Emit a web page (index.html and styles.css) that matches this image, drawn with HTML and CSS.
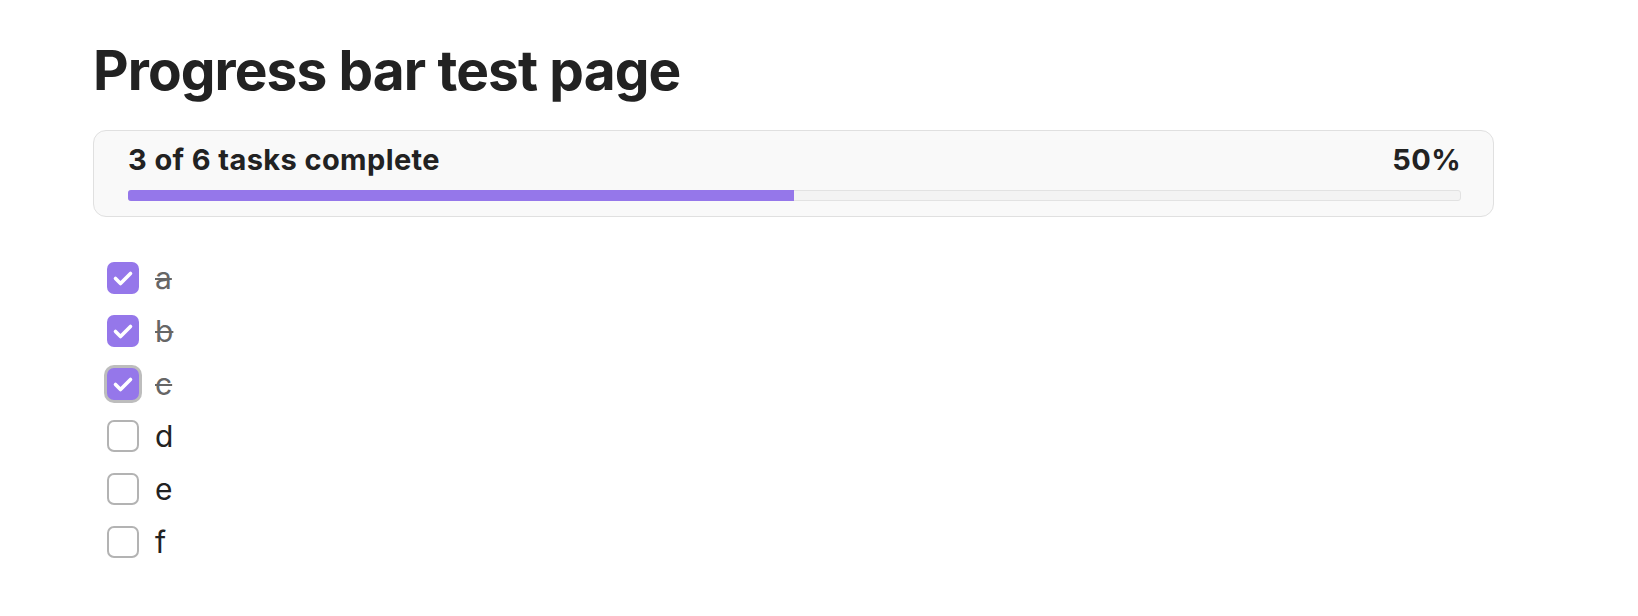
FILE: index.html
```html
<!DOCTYPE html>
<html lang="en">
<head>
<meta charset="utf-8">
<title>Progress bar test page</title>
<link rel="stylesheet" href="styles.css">
</head>
<body>
<main class="page">
  <h1 class="title">Progress bar test page</h1>
  <section class="card">
    <div class="card-head">
      <span class="count">3 of 6 tasks complete</span>
      <span class="pct">50%</span>
    </div>
    <div class="track"><div class="fill" style="width: 50%"></div></div>
  </section>
  <ul class="tasks">
    <li class="task done"><span class="box"><svg viewBox="0 0 32 32"><polyline points="8.5,16.5 13.5,21.5 23.5,11.5"/></svg></span><span class="label">a</span></li>
    <li class="task done"><span class="box"><svg viewBox="0 0 32 32"><polyline points="8.5,16.5 13.5,21.5 23.5,11.5"/></svg></span><span class="label">b</span></li>
    <li class="task done focus"><span class="box"><svg viewBox="0 0 32 32"><polyline points="8.5,16.5 13.5,21.5 23.5,11.5"/></svg></span><span class="label">c</span></li>
    <li class="task"><span class="box"></span><span class="label">d</span></li>
    <li class="task"><span class="box"></span><span class="label">e</span></li>
    <li class="task"><span class="box"></span><span class="label">f</span></li>
  </ul>
</main>
</body>
</html>
```

FILE: styles.css
```css
html, body {
  margin: 0;
  padding: 0;
  background: #ffffff;
}
body {
  font-family: Inter, "Noto Sans", "Liberation Sans", sans-serif;
  color: #222222;
}
.page {
  width: 1401px;
  padding: 38px 0 0 93px;
}
.title {
  margin: 0;
  font-size: 55px;
  font-weight: 700;
  letter-spacing: -0.9px;
  line-height: 64px;
  color: #222222;
}
.card {
  margin-top: 28px;
  box-sizing: border-box;
  width: 1401px;
  height: 87px;
  border: 1px solid #e0e0e0;
  border-radius: 13px;
  background: #f9f9f9;
  padding: 12px 32px 0 34px;
}
.card-head {
  display: flex;
  justify-content: space-between;
  align-items: baseline;
  font-size: 29px;
  font-weight: 700;
  letter-spacing: 0.4px;
  line-height: 34px;
  color: #222222;
}
.track {
  margin-top: 13px;
  height: 11px;
  box-sizing: border-box;
  border: 1px solid #e2e2e2;
  background: #f3f3f3;
  border-radius: 3px;
  position: relative;
}
.fill {
  position: absolute;
  left: -1px;
  top: -1px;
  bottom: -1px;
  background: #9577ea;
  border-radius: 3px 0 0 3px;
}
.tasks {
  list-style: none;
  margin: 45px 0 0 0;
  padding: 0 0 0 14px;
  display: flex;
  flex-direction: column;
  gap: 20.8px;
}
.task {
  display: flex;
  align-items: center;
  gap: 16px;
  height: 32px;
}
.box {
  box-sizing: border-box;
  width: 32px;
  height: 32px;
  border: 2px solid #b3b3b3;
  border-radius: 7px;
  background: #ffffff;
  display: flex;
  align-items: center;
  justify-content: center;
}
.box svg {
  width: 32px;
  height: 32px;
  flex: none;
}
.box polyline {
  fill: none;
  stroke: #ffffff;
  stroke-width: 3.6;
  stroke-linecap: round;
  stroke-linejoin: round;
}
.done .box {
  border: none;
  background: #9577ea;
}
.focus .box {
  box-shadow: 0 0 0 3px #bdbdbd;
}
.label {
  font-size: 30px;
  line-height: 32px;
  color: #222222;
}
.done .label {
  color: #666666;
  text-decoration: line-through;
  text-decoration-thickness: 2px;
}
```
